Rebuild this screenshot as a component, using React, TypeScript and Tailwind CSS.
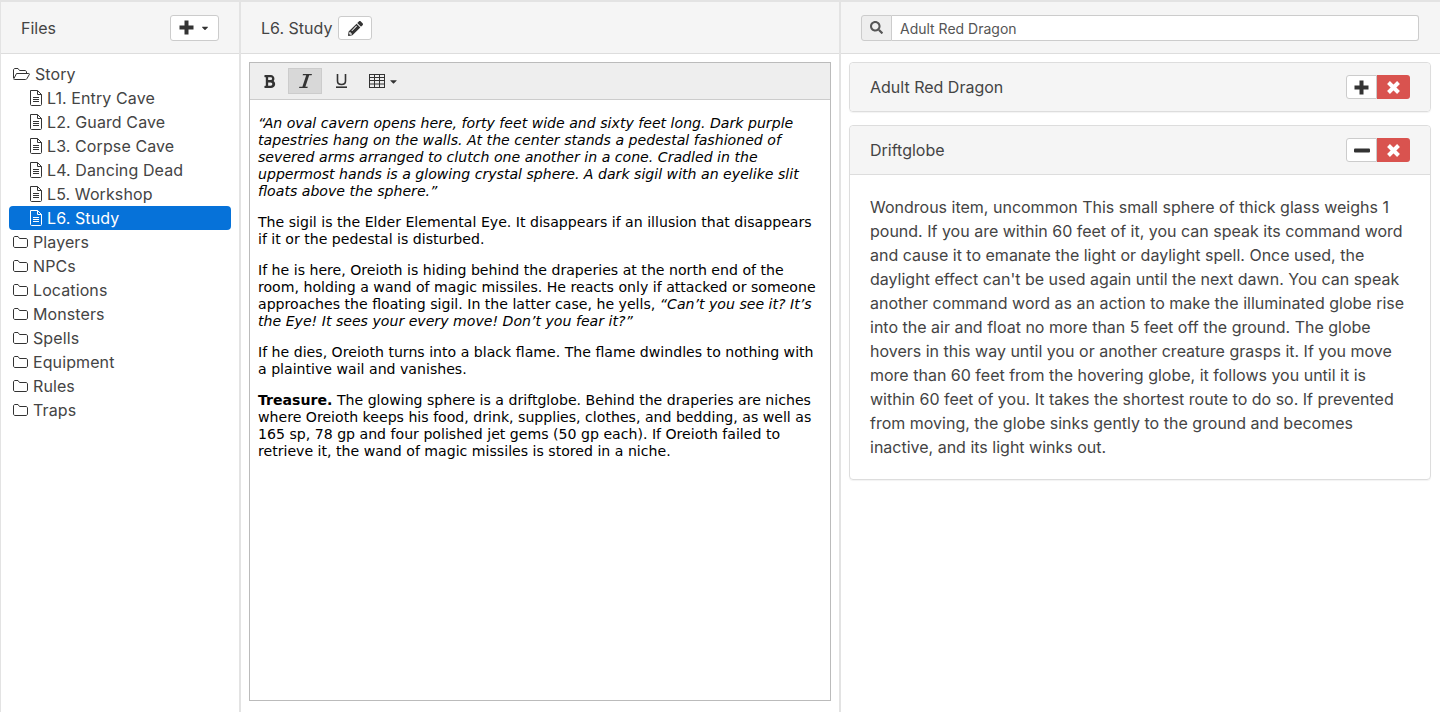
import React from "react";
import { FaSearch, FaPencilAlt, FaBold, FaCaretDown } from "react-icons/fa";

const files = ["L1. Entry Cave", "L2. Guard Cave", "L3. Corpse Cave", "L4. Dancing Dead", "L5. Workshop"];
const folders = ["Players", "NPCs", "Locations", "Monsters", "Spells", "Equipment", "Rules", "Traps"];

function TableIcon() {
  return (
    <svg width="16" height="14" viewBox="0 0 16 14" fill="none" stroke="#333" strokeWidth="1">
      <rect x="0.5" y="0.5" width="15" height="13" />
      <path d="M0.5 3.5H15.5M0.5 6.5H15.5M0.5 10H15.5M5.5 0.5V13.5M10.5 0.5V13.5" />
    </svg>
  );
}
function ItalicIcon() {
  return (
    <svg width="13" height="14" viewBox="0 0 13 14" fill="#333"><path d="M4 0H13L12.6 1.2H10.2L6.4 12.8H8.8L8.4 14H0L0.4 12.8H3.4L7.2 1.2H3.6Z" /></svg>
  );
}
function PlusIcon() {
  return (
    <svg width="15" height="15" viewBox="0 0 15 15" fill="#333"><path d="M5.5 0.5H9.5V5.5H14.5V9.5H9.5V14.5H5.5V9.5H0.5V5.5H5.5Z" /></svg>
  );
}
function MinusIcon() {
  return (
    <svg width="16" height="5" viewBox="0 0 16 5" fill="#333"><rect x="0" y="0.5" width="16" height="4" rx="1" /></svg>
  );
}
function CloseIcon() {
  return (
    <svg width="13" height="13" viewBox="0 0 13 13" fill="none" stroke="#fff" strokeWidth="4"><path d="M1.5 1.5L11.5 11.5M11.5 1.5L1.5 11.5" /></svg>
  );
}
function UnderlineIcon() {
  return (
    <svg width="11" height="14" viewBox="0 0 11 14" fill="none" stroke="#333" strokeWidth="1.6"><path d="M1.5 0V7C1.5 9.5 3.2 10.5 5.5 10.5S9.5 9.5 9.5 7V0" /><path d="M0 13.2H11" /></svg>
  );
}
function FileIcon({ c = "#333" }: { c?: string }) {
  return (
    <svg width="14" height="16" viewBox="0 0 14 16" fill="none" stroke={c} strokeWidth="1" className="shrink-0">
      <path d="M1.5 0.5H8.5L12.5 4.5V14.5C12.5 15 12 15.5 11.5 15.5H2.5C2 15.5 1.5 15 1.5 14.5Z" />
      <path d="M8.5 0.5V4.5H12.5M4 7.5H10M4 9.5H10M4 11.5H10" />
    </svg>
  );
}
function FolderIcon() {
  return (
    <svg width="15" height="12" viewBox="0 0 15 12" fill="none" stroke="#333" strokeWidth="1" className="shrink-0">
      <path d="M2 0.5H5L6.5 2.5H13C13.8 2.5 14.5 3.2 14.5 4V10C14.5 10.8 13.8 11.5 13 11.5H2C1.2 11.5 0.5 10.8 0.5 10V2C0.5 1.2 1.2 0.5 2 0.5Z" />
    </svg>
  );
}
function FolderOpenIcon() {
  return (
    <svg width="17" height="12" viewBox="0 0 17 12" fill="none" stroke="#333" strokeWidth="1" className="shrink-0">
      <path d="M0.5 10V2C0.5 1.2 1.2 0.5 2 0.5H5L6.5 2.5H12C12.8 2.5 13.5 3.2 13.5 4V5" />
      <path d="M0.8 10.8L3.5 5.5H15.8C16.4 5.5 16.6 6 16.3 6.5L14 10.5C13.7 11.2 13.2 11.5 12.5 11.5H1.5C0.8 11.5 0.5 11.2 0.8 10.8Z" />
    </svg>
  );
}

export default function App() {
  return (
    <div className="flex h-[712px] w-[1440px] overflow-hidden border-t-2 border-[#e3e3e3] bg-white font-['Inter','Liberation_Sans',sans-serif] text-[#333]">
      <aside className="flex w-[241px] shrink-0 flex-col border-l border-r-2 border-[#e3e3e3]">
        <header className="flex h-[52px] items-center justify-between border-b border-[#ddd] bg-[#f5f5f5] pl-5 pr-5">
          <span className="pt-[1px] text-[16px] text-[#444]">Files</span>
          <button className="flex h-[26px] w-[49px] items-center justify-center gap-[6px] rounded-[3px] border border-[#ccc] bg-white">
            <PlusIcon />
            <FaCaretDown className="text-[10px] text-[#333]" />
          </button>
        </header>
        <nav className="px-2 pt-2 text-[16px] leading-6 tracking-[0.1px] text-[#444]">
          <div className="flex h-6 items-center gap-[5px] pl-[4px]"><FolderOpenIcon />Story</div>
          {files.map((f) => (
            <div key={f} className="flex h-6 items-center gap-[4px] pl-5"><FileIcon />{f}</div>
          ))}
          <div className="flex h-6 items-center gap-[4px] rounded-[4px] bg-[#0672d9] pl-5 text-white"><FileIcon c="#fff" />L6. Study</div>
          {folders.map((f) => (
            <div key={f} className="flex h-6 items-center gap-[5px] pl-[4px]"><FolderIcon />{f}</div>
          ))}
        </nav>
      </aside>

      <main className="flex w-[600px] shrink-0 flex-col border-r-2 border-[#e3e3e3]">
        <header className="flex h-[52px] items-center gap-[6px] border-b border-[#ddd] bg-[#f5f5f5] pl-5">
          <span className="text-[16px] text-[#444]">L6. Study</span>
          <button className="mt-[1px] flex h-6 w-[34px] items-center justify-center rounded-[3px] border border-[#ccc] bg-white">
            <FaPencilAlt className="text-[15px] text-[#333]" />
          </button>
        </header>
        <div className="mx-2 mt-2 mb-[11px] flex min-h-0 flex-1 flex-col border border-[#bbb]">
          <div className="flex h-[37px] items-center border-b border-[#ccc] bg-[#eeeeee]">
            <span className="flex h-[26px] w-[38px] items-center justify-center"><FaBold className="text-[15px] text-[#333]" /></span>
            <span className="flex h-[26px] w-[34px] items-center justify-center border border-[#ccc] bg-[#d8d8d8]"><ItalicIcon /></span>
            <span className="flex h-[26px] w-[38px] items-center justify-center"><UnderlineIcon /></span>
            <span className="ml-[9px] flex items-center gap-[3px]"><TableIcon /><FaCaretDown className="text-[11px] text-[#333]" /></span>
          </div>
          <div className="flex-1 px-2 pt-[15px] font-['DejaVu_Sans',sans-serif] text-[14.12px] leading-[17px] text-black">
            <p className="mb-[14px] italic">“An oval cavern opens here, forty feet wide and sixty feet long. Dark purple tapestries hang on the walls. At the center stands a pedestal fashioned of severed arms arranged to clutch one another in a cone. Cradled in the uppermost hands is a glowing crystal sphere. A dark sigil with an eyelike slit floats above the sphere.”</p>
            <p className="mb-[14px]">The sigil is the Elder Elemental Eye. It disappears if an illusion that disappears if it or the pedestal is disturbed.</p>
            <p className="mb-[14px]">If he is here, Oreioth is hiding behind the draperies at the north end of the room, holding a wand of magic missiles. He reacts only if attacked or someone approaches the floating sigil. In the latter case, he yells, <em>“Can’t you see it? It’s the Eye! It sees your every move! Don’t you fear it?”</em></p>
            <p className="mb-[14px]">If he dies, Oreioth turns into a black flame. The flame dwindles to nothing with a plaintive wail and vanishes.</p>
            <p><strong>Treasure.</strong> The glowing sphere is a driftglobe. Behind the draperies are niches where Oreioth keeps his food, drink, supplies, clothes, and bedding, as well as 165 sp, 78 gp and four polished jet gems (50 gp each). If Oreioth failed to retrieve it, the wand of magic missiles is stored in a niche.</p>
          </div>
        </div>
      </main>

      <section className="flex min-w-0 flex-1 flex-col">
        <header className="flex h-[52px] items-center border-b border-[#ddd] bg-[#f5f5f5] pl-5 pr-[21px]">
          <span className="flex h-[26px] w-[31px] items-center justify-center rounded-l-[3px] border border-[#ccc] bg-[#eeeeee]"><FaSearch className="text-[13px] text-[#555]" /></span>
          <div className="flex h-[26px] flex-1 items-center rounded-r-[3px] border border-l-0 border-[#ccc] bg-white pl-2 pt-[1px] text-[14px] text-[#555]">Adult Red Dragon</div>
        </header>
        <div className="flex flex-col gap-[13px] pt-2 pl-2 pr-[9px]">
          <Panel title="Adult Red Dragon" icon={<PlusIcon />} />
          <Panel title="Driftglobe" icon={<MinusIcon />}>
            Wondrous item, uncommon This small sphere of thick glass weighs 1 pound. If you are within 60 feet of it, you can speak its command word and cause it to emanate the light or daylight spell. Once used, the daylight effect can't be used again until the next dawn. You can speak another command word as an action to make the illuminated globe rise into the air and float no more than 5 feet off the ground. The globe hovers in this way until you or another creature grasps it. If you move more than 60 feet from the hovering globe, it follows you until it is within 60 feet of you. It takes the shortest route to do so. If prevented from moving, the globe sinks gently to the ground and becomes inactive, and its light winks out.
          </Panel>
        </div>
      </section>
    </div>
  );
}

function Panel({ title, icon, children }: { title: string; icon: React.ReactNode; children?: React.ReactNode }) {
  return (
    <div className="rounded-[4px] border border-[#ddd] shadow-[0_1px_1px_rgba(0,0,0,0.05)]">
      <div className={children ? "flex h-[49px] items-center justify-between rounded-t-[4px] border-b border-[#ddd] bg-[#f5f5f5] px-5" : "flex h-[48px] items-center justify-between rounded-[4px] bg-[#f5f5f5] px-5"}>
        <span className="text-[16px] text-[#444]">{title}</span>
        <span className="flex h-6 w-[64px]">
          <span className="flex w-[31px] items-center justify-center rounded-l-[3px] border border-[#ccc] bg-white">{icon}</span>
          <span className="flex w-[33px] items-center justify-center rounded-r-[3px] bg-[#d9534f]"><CloseIcon /></span>
        </span>
      </div>
      {children ? <div className="px-5 pt-5 pb-5 text-[16px] leading-6 text-[#444]">{children}</div> : null}
    </div>
  );
}
